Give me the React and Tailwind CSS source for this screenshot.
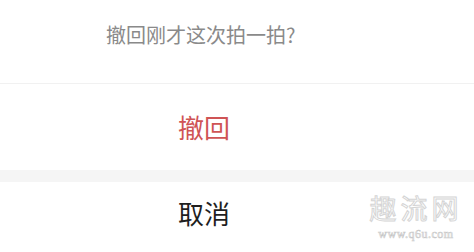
import React from 'react';

export default function App() {
    return (
        <div className="relative w-[474px] h-[252px] bg-white flex flex-col overflow-hidden"
            style={{ fontFamily: '"Noto Sans CJK SC", "Noto Sans", sans-serif' }}>
            {/* 提示 */}
            <div className="h-[83px] pt-[23px] pl-[106px]">
                <div className="text-[20px] leading-[24px] text-[#8a8a8a]">撤回刚才这次拍一拍?</div>
            </div>
            <div className="h-[1px] bg-[#f1f1f1]"></div>

            {/* 撤回 */}
            <div className="h-[86px] flex items-center pl-[178px]">
                <span className="text-[26px] leading-[30px] text-[#cf5455]">撤回</span>
            </div>

            <div className="h-[12px] bg-[#f5f5f5]"></div>

            {/* 取消 */}
            <div className="h-[70px] flex items-center pl-[178px] pb-[8px]">
                <span className="text-[26px] leading-[30px] text-[#1f1f1f]">取消</span>
            </div>

            {/* 水印 */}
            <div className="absolute left-[368px] top-[191px] w-[96px] flex flex-col items-center">
                <div className="text-[27px] leading-[34px] tracking-[4px] text-transparent [-webkit-text-stroke:1px_#d4d4d4]">趣流网</div>
                <div className="mt-[3px] text-[12px] leading-[12px] tracking-[0.5px] text-transparent [-webkit-text-stroke:0.6px_#c8c8c8]"
                    style={{ fontFamily: '"Liberation Serif", serif' }}>www.q6u.com</div>
            </div>
        </div>
    );
}
